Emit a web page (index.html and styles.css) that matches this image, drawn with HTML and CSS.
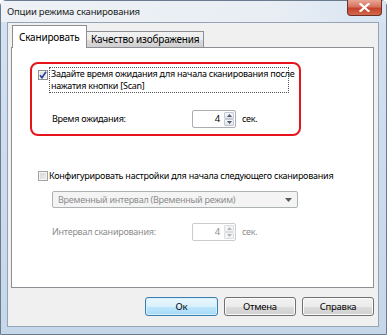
FILE: index.html
```html
<!DOCTYPE html>
<html>
<head>
<meta charset="utf-8">
<link rel="stylesheet" href="styles.css">
</head>
<body>
<div class="window">
  <div class="titlebar">
    <span class="title">Опции режима сканирования</span>
    <div class="close">
      <svg width="11" height="9" viewBox="0 0 11 9"><path d="M1.5 1 L9.5 8 M9.5 1 L1.5 8" stroke="#fff" stroke-width="2.2" stroke-linecap="square"/></svg>
    </div>
  </div>
  <div class="client">
    <div class="tabs">
      <div class="tab active">Сканировать</div>
      <div class="tab">Качество изображения</div>
    </div>
    <div class="panel">
      <div class="highlight">
        <div class="check-row">
          <span class="checkbox">
            <svg width="8" height="8" viewBox="0 0 8 8"><path d="M1 4.2 L3 6.8 L7 0.8" fill="none" stroke="#2b3f9a" stroke-width="1.6"/></svg>
          </span>
          <span class="focus">Задайте время ожидания для начала сканирования после<br>нажатия кнопки [Scan]</span>
        </div>
        <div class="field-row first">
          <span class="label">Время ожидания:</span>
          <div class="spinner">
            <span class="value">4</span>
            <div class="spin">
              <span class="sbtn"><svg width="5" height="3" viewBox="0 0 5 3"><path d="M0 3 L2.5 0 L5 3Z" fill="#4d5a6e"/></svg></span>
              <span class="sbtn"><svg width="5" height="3" viewBox="0 0 5 3"><path d="M0 0 L2.5 3 L5 0Z" fill="#4d5a6e"/></svg></span>
            </div>
          </div>
          <span class="unit">сек.</span>
        </div>
      </div>
      <div class="check-row second">
        <span class="checkbox off"></span>
        <span class="text">Конфигурировать настройки для начала следующего сканирования</span>
      </div>
      <div class="select">
        <span>Временный интервал (Временный режим)</span>
        <svg width="7" height="4" viewBox="0 0 7 4"><path d="M0 0 L7 0 L3.5 4Z" fill="#5a5a5a"/></svg>
      </div>
      <div class="field-row disabled">
        <span class="label">Интервал сканирования:</span>
        <div class="spinner">
          <span class="value">4</span>
          <div class="spin">
            <span class="sbtn"><svg width="5" height="3" viewBox="0 0 5 3"><path d="M0 3 L2.5 0 L5 3Z" fill="#b5b5b5"/></svg></span>
            <span class="sbtn"><svg width="5" height="3" viewBox="0 0 5 3"><path d="M0 0 L2.5 3 L5 0Z" fill="#b5b5b5"/></svg></span>
          </div>
        </div>
        <span class="unit">сек.</span>
      </div>
    </div>
    <div class="buttons">
      <div class="btn default">Ок</div>
      <div class="btn">Отмена</div>
      <div class="btn">Справка</div>
    </div>
  </div>
</div>
</body>
</html>
```

FILE: styles.css
```css
* { box-sizing: border-box; }
html, body { margin: 0; padding: 0; background: #ffffff; }
body {
  font-family: "Noto Sans", "Open Sans", sans-serif;
  font-size: 9px;
  letter-spacing: -0.25px;
  color: #000;
}
.window {
  width: 387px;
  height: 335px;
  border: 1px solid #6b7b8f;
  border-radius: 6px 6px 0 0;
  background: linear-gradient(180deg, #e4ecf5 0px, #d3e1f0 22px, #c6d7ea 100%);
  padding: 0 7px 7px 6px;
  display: flex;
  flex-direction: column;
}
.titlebar {
  height: 21px;
  display: flex;
  align-items: center;
  justify-content: space-between;
  background: linear-gradient(90deg, #eef2f6 0%, #e9eef4 70%, #d7e4f2 100%);
  margin: 0 -7px 0 -6px;
  padding: 0 4px 0 6px;
}
.title {
  font-size: 9.5px;
  letter-spacing: -0.2px;
  line-height: 12px;
  color: #1a1a1a;
  margin-top: 1px;
}
.close {
  width: 35px;
  height: 16px;
  align-self: flex-start;
  margin-top: -1px;
  border: 1px solid #6f2f25;
  border-top: none;
  border-radius: 0 0 4px 4px;
  background: linear-gradient(180deg, #e9a796 0%, #d6735d 45%, #c4422c 55%, #d36a4c 100%);
  display: flex;
  align-items: center;
  justify-content: center;
}
.client {
  flex: 1;
  border: 1px solid #94a3b5;
  background: #f0f0f0;
  padding: 0 3px 0 3px;
  display: flex;
  flex-direction: column;
}
.tabs {
  display: flex;
  align-items: flex-end;
  height: 24px;
  padding-left: 1px;
  position: relative;
  z-index: 1;
}
.tab {
  height: 16px;
  padding: 0 4px;
  border: 1px solid #8c8e94;
  border-bottom: none;
  background: linear-gradient(180deg, #f2f2f2 0%, #ebebeb 50%, #dddddd 51%, #cfcfcf 100%);
  font-size: 10px;
  letter-spacing: -0.2px;
  line-height: 15px;
  color: #000;
  white-space: nowrap;
  margin-left: -1px;
}
.tab.active {
  height: 23px;
  margin-bottom: -1px;
  background: #ffffff;
  padding: 0 5px 0 6px;
  line-height: 22px;
  margin-left: 0;
  position: relative;
  z-index: 2;
  width: 75px;
}
.panel {
  height: 241px;
  border: 1px solid #8c8e94;
  background: #ffffff;
  margin-right: 1px;
  display: flex;
  flex-direction: column;
  align-items: flex-start;
  padding-left: 26px;
}
.highlight {
  margin: 14px 0 0 -8px;
  width: 271px;
  height: 74px;
  border: 2px solid #e8141c;
  border-radius: 8px;
  padding: 3px 0 0 6px;
}
.check-row {
  display: flex;
  align-items: flex-start;
  white-space: nowrap;
}
.checkbox {
  width: 10px;
  height: 10px;
  border: 1px solid #8e8f8f;
  background: linear-gradient(135deg, #dcdcdc 0%, #f4f4f4 100%);
  box-shadow: inset 0 0 0 1px #f4f4f4;
  display: flex;
  align-items: center;
  justify-content: center;
  margin-top: 3px;
  flex: none;
}
.focus {
  margin-left: 1px;
  border: 1px dotted #555;
  line-height: 12px;
  padding: 0 0 0 1px;
  width: 240px;
  white-space: nowrap;
}
.field-row {
  display: flex;
  align-items: center;
  height: 18px;
}
.field-row.first {
  margin: 17px 0 0 14px;
}
.label {
  width: 140px;
  line-height: 12px;
}
.spinner {
  width: 44px;
  height: 18px;
  border: 1px solid #abadb3;
  border-radius: 2px;
  background: #fff;
  display: flex;
  align-items: stretch;
}
.value {
  flex: 1;
  text-align: right;
  padding-right: 4px;
  line-height: 16px;
  font-size: 9.5px;
}
.spin {
  width: 11px;
  display: flex;
  flex-direction: column;
  padding: 1px 1px 1px 0;
}
.sbtn {
  flex: 1;
  border: 1px solid #c4cad3;
  border-radius: 1px;
  background: linear-gradient(180deg, #f6f7f9, #e1e5ea);
  display: flex;
  align-items: center;
  justify-content: center;
}
.unit {
  margin-left: 6px;
  line-height: 12px;
}
.check-row.second {
  margin-top: 34px;
  align-items: center;
  line-height: 12px;
}
.check-row.second .checkbox { margin-top: 0; }
.checkbox.off {
  border-color: #a2a2a2;
  background: linear-gradient(135deg, #d6d6d6 0%, #eeeeee 100%);
}
.check-row.second .text { margin-left: 1px; }
.select {
  margin: 9px 0 0 14px;
  width: 246px;
  height: 17px;
  border: 1px solid #adb2b5;
  border-radius: 2px;
  background: #f4f4f4;
  color: #8d8d8d;
  display: flex;
  align-items: center;
  justify-content: space-between;
  padding: 0 5px 0 5px;
  line-height: 12px;
}
.field-row.disabled {
  margin: 15px 0 0 14px;
  color: #8d8d8d;
}
.field-row.disabled .spinner {
  border-color: #c9cbcf;
}
.field-row.disabled .sbtn {
  border-color: #dadde2;
  background: #f4f4f4;
}
.field-row.disabled .value { color: #8d8d8d; }
.buttons {
  display: flex;
  justify-content: flex-end;
  gap: 6px;
  margin-top: 9px;
  padding-right: 1px;
}
.btn {
  width: 72px;
  height: 19px;
  border: 1px solid #707070;
  border-radius: 3px;
  background: linear-gradient(180deg, #f2f2f2 0%, #ebebeb 50%, #dddddd 51%, #cfcfcf 100%);
  box-shadow: inset 0 0 0 1px #fbfbfb;
  text-align: center;
  line-height: 17px;
  font-size: 9.5px;
}
.btn.default {
  width: 73px;
  border-color: #3c7fb1;
  background: linear-gradient(180deg, #eaf6fd 0%, #d9f0fc 50%, #bee6fd 51%, #a7d9f5 100%);
  box-shadow: inset 0 0 0 1px #d6effc;
}
```
